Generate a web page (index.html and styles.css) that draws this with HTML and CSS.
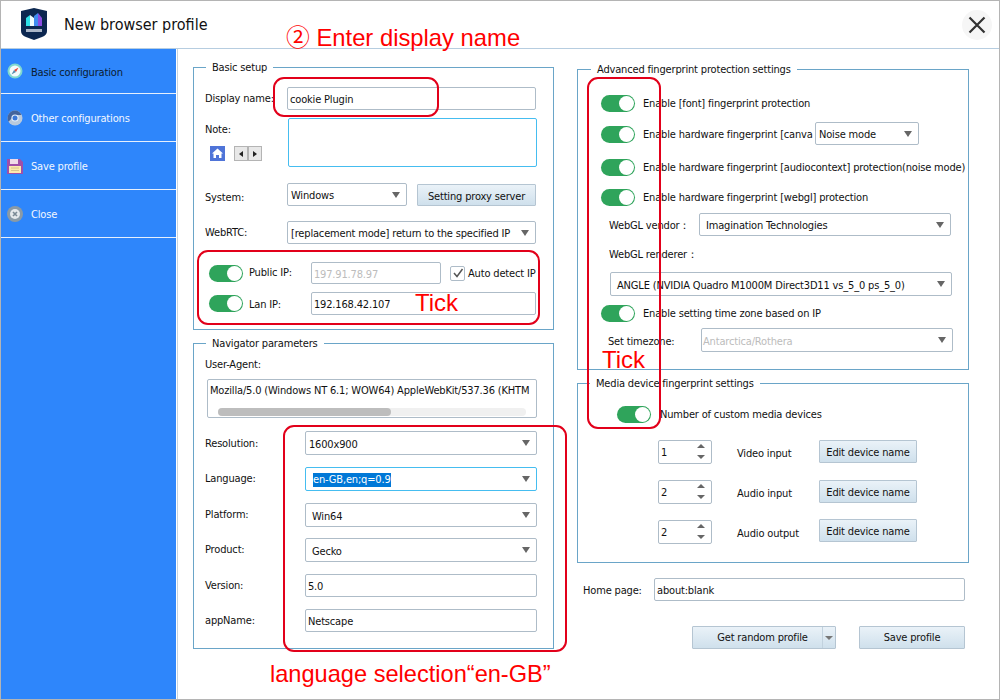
FILE: index.html
```html
<!DOCTYPE html>
<html lang="en">
<head>
<meta charset="utf-8">
<title>New browser profile</title>
<link rel="stylesheet" href="styles.css">
</head>
<body>
<div class="window">
  <header class="header">
    <svg class="logo" width="26" height="32" viewBox="0 0 26 32">
      <path d="M0 3 13 0l13 3v20q0 4-5 6l-8 3-8-3q-5-2-5-6z" fill="#0c2750"/>
      <path d="M5 10l4-3v11H5z" fill="#2fe0e8"/>
      <path d="M9 7l4 3v8H9z" fill="#eefcff"/>
      <path d="M13 8l4-3v13h-4z" fill="#3f8cf0"/>
      <path d="M17 5l4 5v8h-4z" fill="#8a4ce0"/>
      <rect x="5" y="21" width="16" height="3" fill="#aab6c8"/>
    </svg>
    <h1 class="heading">New browser profile</h1>
    <button class="close" aria-label="Close">
      <svg width="30" height="30" viewBox="0 0 30 30"><circle cx="15" cy="15" r="15" fill="#f6f6f6"/><path d="M7.500 7.500l15 15M22.500 7.500l-15 15" stroke="#333" stroke-width="2.200" fill="none"/></svg>
    </button>
  </header>
  <div class="body">
    <nav class="side">
      <div class="side-item h44 dark">
        <svg width="16" height="16" viewBox="0 0 16 16"><circle cx="8" cy="8" r="7.500" fill="#7fd8cf"/><circle cx="8" cy="8" r="5.500" fill="#f4fbfb"/><path d="M11.500 4.500 9 9 7 7z" fill="#e8483c"/><path d="M4.500 11.500 7 7l2 2z" fill="#5a8fb0"/></svg>
        <span>Basic configuration</span>
      </div>
      <div class="side-item h47">
        <svg width="16" height="16" viewBox="0 0 16 16"><circle cx="8" cy="8" r="7.500" fill="#b9c9dc"/><path d="M8 .5a7.500 7.500 0 0 0-6.500 11.200L5 8a3 3 0 0 1 3-3h6.500A7.500 7.500 0 0 0 8 .5z" fill="#43649c"/><circle cx="8" cy="8" r="3.600" fill="#e8f0fa"/><circle cx="8" cy="8" r="2.500" fill="#3a78d8"/></svg>
        <span>Other configurations</span>
      </div>
      <div class="side-item h47">
        <svg width="16" height="16" viewBox="0 0 16 16"><path d="M0 1h13l3 3v12H0z" fill="#a04fa8"/><rect x="3" y="1" width="8" height="5" fill="#f0dbe8"/><rect x="2" y="8" width="12" height="7" fill="#fbe9ad"/><path d="M4 10h8M4 12.500h8" stroke="#d8c48a"/></svg>
        <span>Save profile</span>
      </div>
      <div class="side-item h47">
        <svg width="16" height="16" viewBox="0 0 16 16"><circle cx="8" cy="8" r="8" fill="#8a9aa6"/><circle cx="8" cy="8" r="5" fill="#e4e8ec"/><path d="M6 6l4 4M10 6l-4 4" stroke="#7a8a96" stroke-width="1.600"/></svg>
        <span>Close</span>
      </div>
    </nav>
    <main class="main">
      <div class="col col-left">
        <section class="group basic">
          <div class="title">Basic setup</div>
          <div class="row h23 mt13"><label class="lab w82">Display name:</label><div class="field w249">cookie Plugin</div></div>
          <div class="row note-row mt8">
            <div class="note-left">
              <label class="lab">Note:</label>
              <div class="note-tools">
                <svg width="15" height="15" viewBox="0 0 15 15"><rect width="15" height="15" fill="#4f74d8"/><path d="M7.500 2.500 13 7.500h-1.500V12H9V9H6v3H3.500V7.500H2z" fill="#fff"/></svg>
                <div class="stepper"><span class="step"><i class="tri-l"></i></span><span class="step"><i class="tri-r"></i></span></div>
              </div>
            </div>
            <div class="field area"></div>
          </div>
          <div class="row h23 mt16"><label class="lab w82 dn6">System:</label><div class="field select w120">Windows<i class="arrow"></i></div><button class="btn proxy">Setting proxy server</button></div>
          <div class="row h23 mt15"><label class="lab w82">WebRTC:</label><div class="field select w249">[replacement mode] return to the specified IP<i class="arrow"></i></div></div>
          <div class="row h22 mt18 ip">
            <span class="toggle"></span><label class="lab w62 up2">Public IP:</label><div class="field w130 off">197.91.78.97</div>
            <span class="check"><svg width="12" height="12" viewBox="0 0 12 12"><path d="M2 6l3 3.500L10.500 2" stroke="#555" stroke-width="1.500" fill="none"/></svg></span><span class="lab">Auto detect IP</span>
          </div>
          <div class="row h23 mt8 ip"><span class="toggle"></span><label class="lab w62 dn2">Lan IP:</label><div class="field w225">192.168.42.107</div></div>
        </section>
        <section class="group nav">
          <div class="title">Navigator parameters</div>
          <div class="row h14 mt7"><label class="lab">User-Agent:</label></div>
          <div class="ua mt8">
            <div class="ua-text">Mozilla/5.0 (Windows NT 6.1; WOW64) AppleWebKit/537.36 (KHTM</div>
            <div class="track"><div class="thumb"></div></div>
          </div>
          <div class="row h24 mt13"><label class="lab w100">Resolution:</label><div class="field select w232">1600x900<i class="arrow"></i></div></div>
          <div class="row h24 mt12"><label class="lab w100 up2">Language:</label><div class="field select w232 focus"><span class="sel">en-GB,en;q=0.9</span><i class="arrow"></i></div></div>
          <div class="row h24 mt12"><label class="lab w100 up2">Platform:</label><div class="field select w232 pad6">Win64<i class="arrow"></i></div></div>
          <div class="row h24 mt11"><label class="lab w100 up2">Product:</label><div class="field select w232 pad6">Gecko<i class="arrow"></i></div></div>
          <div class="row h23 mt12"><label class="lab w100">Version:</label><div class="field w232">5.0</div></div>
          <div class="row h23 mt12"><label class="lab w100">appName:</label><div class="field w232">Netscape</div></div>
        </section>
      </div>
      <div class="col col-right">
        <section class="group adv">
          <div class="title">Advanced fingerprint protection settings</div>
          <div class="row h18 mt18"><span class="toggle"></span><span class="lab">Enable [font] fingerprint protection</span></div>
          <div class="row h23 mt10"><span class="toggle dn2"></span><span class="lab clip dn2">Enable hardware fingerprint [canva</span><div class="field select w104 canvas">Noise mode<i class="arrow"></i></div></div>
          <div class="row h18 mt13"><span class="toggle"></span><span class="lab nowrap">Enable hardware fingerprint [audiocontext] protection(noise mode)</span></div>
          <div class="row h18 mt12"><span class="toggle"></span><span class="lab">Enable hardware fingerprint [webgl] protection</span></div>
          <div class="row h23 mt7 in8"><label class="lab w90 dn2">WebGL vendor：</label><div class="field select w252 pad6">Imagination Technologies<i class="arrow"></i></div></div>
          <div class="row h14 mt11 in8"><label class="lab">WebGL renderer：</label></div>
          <div class="row h24 mt11 in9"><div class="field select w342 pad6">ANGLE (NVIDIA Quadro M1000M Direct3D11 vs_5_0 ps_5_0)<i class="arrow"></i></div></div>
          <div class="row h18 mt8"><span class="toggle"></span><span class="lab">Enable setting time zone based on IP</span></div>
          <div class="row h24 mt6 in7"><label class="lab w93 dn2">Set timezone:</label><div class="field select w252 off tz">Antarctica/Rothera<i class="arrow"></i></div></div>
        </section>
        <section class="group media">
          <div class="title">Media device fingerprint settings</div>
          <div class="row h18 mt15 in16"><span class="toggle"></span><span class="lab media-lab">Number of custom media devices</span></div>
          <div class="dev mt17"><div class="field spin">1<span class="spin-arrows"><i class="up"></i><i class="down"></i></span></div><span class="lab dev-lab">Video input</span><button class="btn edit">Edit device name</button></div>
          <div class="dev mt16"><div class="field spin">2<span class="spin-arrows"><i class="up"></i><i class="down"></i></span></div><span class="lab dev-lab">Audio input</span><button class="btn edit">Edit device name</button></div>
          <div class="dev mt16"><div class="field spin">2<span class="spin-arrows"><i class="up"></i><i class="down"></i></span></div><span class="lab dev-lab">Audio output</span><button class="btn edit raise">Edit device name</button></div>
        </section>
        <div class="row h23 mt15 home"><label class="lab w71 dn2">Home page:</label><div class="field w311">about:blank</div></div>
        <div class="actions">
          <div class="btn split"><span class="split-main">Get random profile</span><span class="split-drop"><i class="arrow small"></i></span></div>
          <button class="btn save">Save profile</button>
        </div>
      </div>
    </main>
  </div>
  <div class="mark mark-name"></div>
  <div class="mark mark-ip"></div>
  <div class="mark mark-lang"></div>
  <div class="mark mark-tick"></div>
  <div class="say say-name">② Enter display name</div>
  <div class="say say-tick1">Tick</div>
  <div class="say say-tick2">Tick</div>
  <div class="say say-lang">language selection“en-GB”</div>
</div>
</body>
</html>
```
FILE: styles.css
```css
* { box-sizing: border-box; }
html, body { margin: 0; padding: 0; }
body { width: 1000px; height: 700px; overflow: hidden; background: #fff; font-family: "DejaVu Sans", "Noto Sans", sans-serif; font-stretch: condensed; font-size: 11px; letter-spacing: -0.17px; color: #111; }
.window { position: relative; width: 1000px; height: 700px; border: 1px solid #b4b4b4; display: flex; flex-direction: column; overflow: hidden; }
.header { height: 48px; flex: none; display: flex; align-items: center; border-bottom: 1px solid #b6cde0; padding-left: 20px; }
.logo { flex: none; margin-top: -1px; }
.heading { margin: 0 0 0 17px; font-weight: 400; font-size: 16px; letter-spacing: 0; color: #111; flex: 1; }
.close { border: 0; padding: 0; background: none; margin-right: 7px; height: 30px; width: 30px; }
.body { flex: 1; display: flex; min-height: 0; }
.side { width: 176px; flex: none; background: #2e86fb; border-right: 1px solid #fff; box-shadow: 1px 0 0 #c8d4de; }
.side-item { display: flex; align-items: center; gap: 8px; padding-left: 6px; border-bottom: 1px solid #e6f0fd; color: #f2f7ff; }
.side-item span { display: block; margin-top: 2px; }
.side-item.dark { color: #0c1c30; }
.h44 { height: 45px; }
.h47 { height: 48px; }
.main { flex: 1; display: flex; gap: 23px; padding: 18px 0 0 16px; min-width: 0; }
.col { display: flex; flex-direction: column; }
.col-left { width: 361px; }
.col-right { width: 392px; margin-top: 2px; }
.group { border: 1px solid #6aa5c8; padding-left: 11px; }
.title { margin: -8px 0 0 1px; width: fit-content; height: 14px; line-height: 16px; padding: 0 6px; background: #fff; }
.basic { padding-bottom: 14px; }
.nav { margin-top: 13px; padding-bottom: 16px; }
.adv { padding-left: 23px; padding-bottom: 17px; }
.media { margin-top: 13px; padding-left: 0; padding-bottom: 18px; }
.media .title { margin-left: 12px; }
.adv .title { margin-left: -10px; }
.row { display: flex; align-items: center; }
.h14 { height: 14px; } .h18 { height: 18px; } .h22 { height: 22px; } .h23 { height: 23px; } .h24 { height: 24px; }
.mt6 { margin-top: 6px; } .mt7 { margin-top: 7px; } .mt8 { margin-top: 8px; } .mt10 { margin-top: 10px; } .mt11 { margin-top: 11px; } .mt12 { margin-top: 12px; } .mt13 { margin-top: 13px; } .mt15 { margin-top: 15px; } .mt16 { margin-top: 16px; } .mt17 { margin-top: 17px; } .mt18 { margin-top: 18px; }
.dn2 { margin-top: 2px; } .dn6 { margin-top: 6px; } .up2 { margin-bottom: 2px; }
.lab { flex: none; white-space: nowrap; }
.w62 { width: 62px; } .w71 { width: 71px; } .w82 { width: 82px; } .w90 { width: 90px; } .w93 { width: 93px; } .w100 { width: 100px; }
.field { position: relative; flex: none; height: 100%; display: flex; align-items: center; border: 1px solid #aebcc8; border-radius: 2px; padding: 2px 0 0 2px; background: #fff; white-space: nowrap; overflow: hidden; }
.w104 { width: 104px; } .w120 { width: 120px; } .w130 { width: 130px; } .w225 { width: 225px; } .w232 { width: 232px; } .w249 { width: 249px; } .w252 { width: 252px; } .w311 { width: 311px; } .w342 { width: 342px; }
.select { padding-left: 3px; }
.pad6 { padding-left: 6px; }
.tz { padding-left: 1px; }
.off { color: #bcbcbc; }
.arrow { position: absolute; right: 6px; top: 50%; margin-top: -3px; width: 0; height: 0; border: 4.5px solid transparent; border-top: 6px solid #666; border-bottom: 0; }
.arrow.small { position: static; display: block; margin: 0; border-width: 4px 4px 0; border-top-color: #777; border-bottom: 0; }
.area { width: 249px; height: 49px; border-color: #45bdf0; }
.note-row { align-items: flex-start; height: 49px; }
.note-left { width: 83px; height: 100%; display: flex; flex-direction: column; padding-top: 5px; }
.note-tools { display: flex; align-items: center; gap: 9px; margin: 10px 0 0 5px; }
.stepper { display: flex; width: 28px; height: 15px; border: 1px solid #b4b4b4; background: #e8e8e8; }
.step { flex: 1; display: flex; align-items: center; justify-content: center; }
.step + .step { border-left: 2px solid #b4b4b4; }
.tri-l, .tri-r { width: 0; height: 0; border: 3px solid transparent; }
.tri-l { border-right: 4px solid #222; border-left: 0; }
.tri-r { border-left: 4px solid #222; border-right: 0; }
.btn { flex: none; border: 1px solid #b5c5d2; border-radius: 1px; background: linear-gradient(#eaf2f8, #cfe0ec); font: inherit; letter-spacing: inherit; color: #111; padding: 2px 0 0; display: flex; align-items: center; justify-content: center; }
.proxy { width: 119px; height: 22px; margin-left: 10px; padding-top: 3px; }
.ip { padding-left: 4px; }
.ip .toggle { margin-right: 6px; }
.toggle { flex: none; position: relative; display: block; width: 34px; height: 17px; border-radius: 9px; background: #2fa45b; }
.toggle::after { content: ""; position: absolute; right: 1px; top: 1px; width: 15px; height: 15px; border-radius: 50%; background: #fff; }
.check { flex: none; width: 15px; height: 15px; margin: 0 3px 0 9px; border: 1px solid #aebcc8; border-radius: 2px; display: flex; align-items: center; justify-content: center; }
.ua { width: 330px; height: 39px; margin-left: 2px; border: 1px solid #aebcc8; border-radius: 2px; overflow: hidden; padding: 2px 2px 0; }
.ua-text { height: 20px; line-height: 18px; white-space: nowrap; overflow: hidden; }
.track { margin: 6px 8px 0; height: 8px; border-radius: 4px; background: #f0f0f0; }
.thumb { width: 173px; height: 8px; border-radius: 4px; background: #bdbdbd; }
.focus { border-color: #45bdf0; padding-left: 7px; }
.sel { background: #0078d7; color: #fff; line-height: 14px; }
.adv .toggle { margin-right: 8px; }
.clip { width: 172px; overflow: hidden; }
.nowrap { white-space: nowrap; }
.in7 { padding-left: 7px; } .in8 { padding-left: 8px; } .in9 { padding-left: 9px; } .in16 { padding-left: 39px; }
.media-lab { margin-left: 9px; }
.dev { display: flex; align-items: flex-start; height: 24px; padding-left: 80px; }
.spin { width: 54px; height: 24px; padding: 0 0 0 2px; }
.spin-arrows { position: absolute; right: 6px; top: 3px; display: flex; flex-direction: column; gap: 7px; }
.up, .down { display: block; width: 0; height: 0; border: 4px solid transparent; }
.up { border-bottom: 4px solid #666; border-top: 0; }
.down { border-top: 4px solid #666; border-bottom: 0; }
.dev-lab { width: 82px; margin-left: 25px; line-height: 27px; }
.edit { width: 98px; height: 23px; }
.raise { margin-top: -1px; }
.home { padding-left: 6px; }
.actions { display: flex; gap: 23px; margin: 25px 0 0 115px; }
.split { width: 144px; height: 23px; justify-content: flex-start; padding-top: 0; }
.split-main { flex: 1; text-align: center; padding-left: 10px; }
.split-drop { width: 13px; height: 100%; display: flex; align-items: center; justify-content: center; border-left: 1px solid #c2d2de; }
.save { width: 106px; height: 23px; padding-top: 0; }
.mark { position: absolute; border: 2px solid #e2001a; border-radius: 11px; pointer-events: none; }
.mark-name { left: 272px; top: 76px; width: 166px; height: 40px; }
.mark-ip { left: 196px; top: 249px; width: 343px; height: 75px; }
.mark-lang { left: 282px; top: 424px; width: 284px; height: 227px; }
.mark-tick { left: 586px; top: 76px; width: 74px; height: 352px; }
.say { position: absolute; font-family: "Liberation Sans", "Noto Sans CJK SC", sans-serif; font-stretch: normal; letter-spacing: 0; font-size: 24px; line-height: 28px; color: #f00; white-space: nowrap; }
.say-name { left: 285px; top: 23px; font-size: 23.8px; }
.say-tick1 { left: 414px; top: 288px; }
.say-tick2 { left: 601px; top: 345px; }
.say-lang { left: 269px; top: 659px; font-size: 23.6px; }
```
